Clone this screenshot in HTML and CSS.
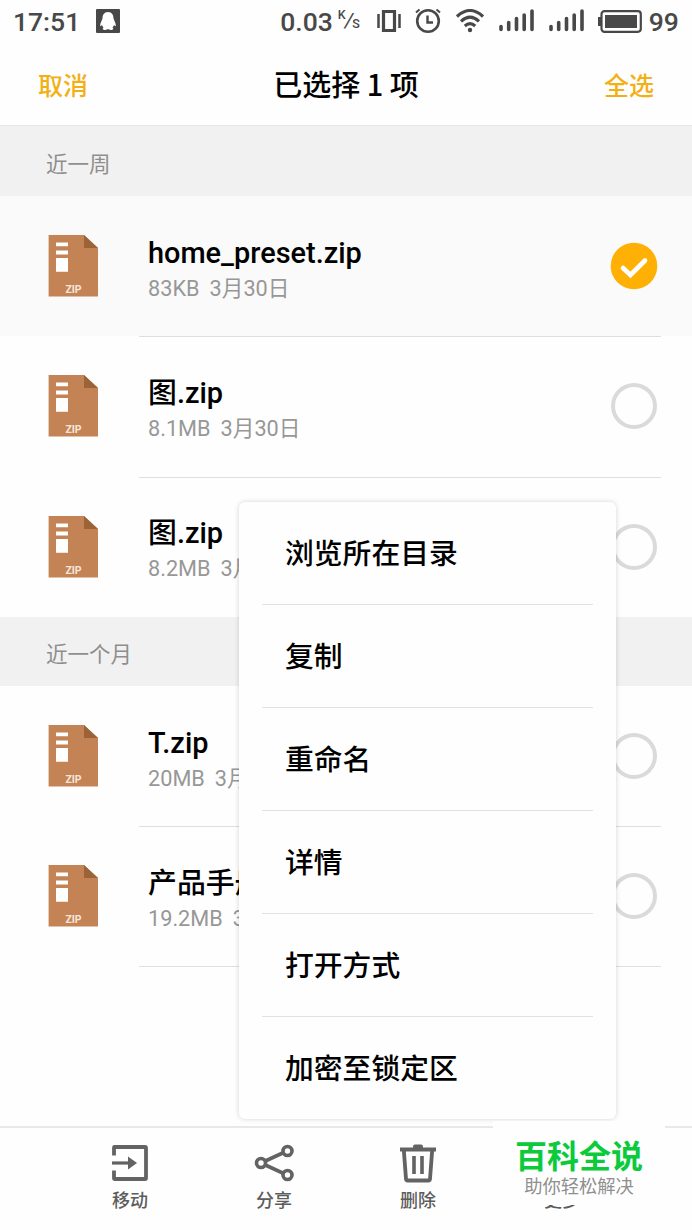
FILE: index.html
```html
<!DOCTYPE html>
<html lang="zh-CN">
<head>
    <meta charset="UTF-8">
    <meta name="viewport" content="width=device-width, initial-scale=1.0">
    <title>文件管理</title>
    <link rel="stylesheet" href="styles.css">
</head>
<body>

    <!-- shared icons -->
    <svg class="defs" width="0" height="0">
        <symbol id="zip" viewBox="0 0 50 62">
            <path d="M0.600 0H36L50 13V61.500H0.600Z" fill="#c38355"/>
            <path d="M36 0L50 13H36Z" fill="#9c6339"/>
            <path d="M8 7.500H20V11.300H8ZM8 15.500H20V19.500H8ZM8 23H20V36.700H8Z" fill="#fff"/>
            <text x="25.500" y="58" text-anchor="middle" class="zip-label">ZIP</text>
        </symbol>
        <symbol id="signal" viewBox="0 0 36 24">
            <path d="M2 17.500V20.500M9.700 13.500V20.500M17.500 9.500V20.500M25.200 6V20.500M33 2V20.500" fill="none" stroke="#484848" stroke-width="3.600" stroke-linecap="round"/>
        </symbol>
    </svg>

    <header class="status-bar">
        <span class="time">17:51</span>
        <svg class="icon-qq" width="24" height="24" viewBox="0 0 24 24">
            <rect width="24" height="24" rx="1" fill="#484848"/>
            <path d="M12 3C8 3 6.500 6 6.500 9.500C6 11.500 4 14 4.200 17C4.800 17.500 5.500 16.500 6 16C6.300 17 7 18 7.500 18.500C6 19.500 7 21 9 21C10.500 21 11.500 20 12 20C12.500 20 13.500 21 15 21C17 21 18 19.500 16.500 18.500C17 18 17.700 17 18 16C18.500 16.500 19.200 17.500 19.800 17C20 14 18 11.500 17.500 9.500C17.500 6 16 3 12 3Z" fill="#fff"/>
        </svg>
        <span class="speed">0.03</span>
        <span class="unit"><sup>K</sup><i>/</i><sub>S</sub></span>
        <svg class="icon-vibrate" width="24" height="24" viewBox="0 0 24 24">
            <path d="M1.500 5V19M22.500 5V19" stroke="#484848" stroke-width="2.500"/>
            <path d="M6.500 2.500H17.500V21.500H6.500Z" fill="none" stroke="#484848" stroke-width="3.200"/>
        </svg>
        <svg class="icon-alarm" width="26" height="26" viewBox="0 0 26 26">
            <circle cx="13" cy="13" r="10.800" fill="none" stroke="#484848" stroke-width="2.600"/>
            <path d="M12.500 7.500V14.500H18" fill="none" stroke="#484848" stroke-width="2.400"/>
            <path d="M1 4.500L4.500 1.500M25 4.500L21.500 1.500" stroke="#484848" stroke-width="2"/>
        </svg>
        <svg class="icon-wifi" width="28" height="24" viewBox="0 0 28 24">
            <path d="M1 7.500Q14 -4.500 27 7.500M5 12.300Q14 4 23 12.300M8.800 17Q14 12.300 19.200 17" fill="none" stroke="#484848" stroke-width="3.100"/>
            <circle cx="14" cy="21" r="2.200" fill="#484848"/>
        </svg>
        <svg class="icon-signal" width="36" height="24"><use href="#signal"/></svg>
        <svg class="icon-signal second" width="36" height="24"><use href="#signal"/></svg>
        <svg class="icon-battery" width="44" height="23" viewBox="0 0 44 23">
            <rect x="3.500" y="1.200" width="39.300" height="20.600" rx="3" fill="none" stroke="#484848" stroke-width="2.200"/>
            <rect x="7" y="5" width="32" height="13" fill="#484848"/>
            <path d="M3 7H0V16H3Z" fill="#484848"/>
        </svg>
        <span class="percent">99</span>
    </header>

    <nav class="title-bar">
        <span class="action">取消</span>
        <h1>已选择 1 项</h1>
        <span class="action">全选</span>
    </nav>

    <main>
        <h2 class="section">近一周</h2>
        <div class="file selected">
            <svg class="zip" width="50" height="62"><use href="#zip"/></svg>
            <div class="info">
                <p class="name">home_preset.zip</p>
                <p class="meta"><span>83KB</span><span>3月30日</span></p>
            </div>
            <svg class="check" width="48" height="48" viewBox="0 0 48 48">
                <circle cx="24" cy="24" r="23.300" fill="#ffb005"/>
                <path d="M13 26L20.500 33L35 18.500" fill="none" stroke="#fff" stroke-width="4.600" stroke-linecap="round" stroke-linejoin="miter"/>
            </svg>
        </div>
        <div class="file">
            <svg class="zip" width="50" height="62"><use href="#zip"/></svg>
            <div class="info">
                <p class="name">图.zip</p>
                <p class="meta"><span>8.1MB</span><span>3月30日</span></p>
            </div>
            <span class="radio"></span>
        </div>
        <div class="file last">
            <svg class="zip" width="50" height="62"><use href="#zip"/></svg>
            <div class="info">
                <p class="name">图.zip</p>
                <p class="meta"><span>8.2MB</span><span>3月30日</span></p>
            </div>
            <span class="radio"></span>
        </div>

        <h2 class="section month">近一个月</h2>
        <div class="file">
            <svg class="zip" width="50" height="62"><use href="#zip"/></svg>
            <div class="info">
                <p class="name">T.zip</p>
                <p class="meta"><span>20MB</span><span>3月</span></p>
            </div>
            <span class="radio"></span>
        </div>
        <div class="file">
            <svg class="zip" width="50" height="62"><use href="#zip"/></svg>
            <div class="info">
                <p class="name">产品手册</p>
                <p class="meta"><span>19.2MB</span><span>3月</span></p>
            </div>
            <span class="radio"></span>
        </div>
    </main>

    <footer class="toolbar">
        <div class="tool">
            <svg width="40" height="40" viewBox="0 0 40 40">
                <path d="M4 12.500V4.500Q4 4 4.500 4H35Q36 4 36 5V35Q36 36 35 36H4.500Q4 36 4 35.500V27.500" fill="none" stroke="#636363" stroke-width="3.800"/>
                <path d="M2 20H20" stroke="#636363" stroke-width="3.200"/>
                <path d="M18 13.500L27 20L18 26.500Z" fill="#636363"/>
            </svg>
            <span>移动</span>
        </div>
        <div class="tool">
            <svg width="40" height="40" viewBox="0 0 40 40">
                <path d="M7 20L33 8M7 20L33 32" stroke="#636363" stroke-width="3.600"/>
                <g fill="#fff" stroke="#636363" stroke-width="3.600">
                    <circle cx="7" cy="20" r="4.500"/>
                    <circle cx="33.500" cy="8" r="4.500"/>
                    <circle cx="33.500" cy="32" r="4.500"/>
                </g>
            </svg>
            <span>分享</span>
        </div>
        <div class="tool">
            <svg width="40" height="40" viewBox="0 0 40 40">
                <path d="M2 6.500H38" stroke="#636363" stroke-width="3.800"/>
                <path d="M15 6V3.500Q15 1.500 17 1.500H23Q25 1.500 25 3.500V6Z" fill="#636363"/>
                <path d="M5.800 7L8 36Q8.200 37.500 9.500 37.500H30.500Q31.800 37.500 32 36L34.200 7" fill="none" stroke="#636363" stroke-width="3.800"/>
                <path d="M16 13V31M24 13V31" stroke="#636363" stroke-width="3.600"/>
            </svg>
            <span>删除</span>
        </div>
        <div class="tool">
            <svg width="40" height="40" viewBox="0 0 40 40">
                <g fill="#636363">
                    <circle cx="8" cy="20" r="3"/>
                    <circle cx="20" cy="20" r="3"/>
                    <circle cx="32" cy="20" r="3"/>
                </g>
            </svg>
            <span>更多</span>
        </div>
    </footer>

    <ul class="menu">
        <li>浏览所在目录</li>
        <li>复制</li>
        <li>重命名</li>
        <li>详情</li>
        <li>打开方式</li>
        <li>加密至锁定区</li>
    </ul>

    <div class="badge">
        <strong>百科全说</strong>
        <span>助你轻松解决</span>
    </div>

</body>
</html>
```
FILE: styles.css
```css
html, body {
    height: 100%;
    margin: 0;
    padding: 0;
    overflow: hidden;
}

body {
    position: relative;
    display: flex;
    flex-direction: column;
    background: #fefefe;
    color: #000;
    font-family: Roboto, "Noto Sans CJK SC", sans-serif;
}

h1, h2, p, ul {
    margin: 0;
    padding: 0;
}

.defs {
    position: absolute;
}

.status-bar {
    display: flex;
    align-items: center;
    box-sizing: border-box;
    height: 42px;
    padding-left: 13px;
    color: #484848;
    font-size: 26.5px;
    font-weight: 500;
}

.icon-qq {
    margin-left: 16px;
}

.speed {
    margin-left: 160px;
}

.unit {
    display: flex;
    align-items: center;
    width: 24px;
    margin-left: 5px;
    font-size: 15px;
    line-height: 1;
}

.unit sup {
    margin-top: -11px;
}

.unit i {
    margin: 0 -1px;
    font-size: 21px;
    font-weight: 400;
}

.unit sub {
    margin-top: 7px;
}

.icon-vibrate {
    margin-left: 15px;
}

.icon-alarm {
    margin-left: 14px;
}

.icon-wifi {
    margin-left: 15px;
}

.icon-signal {
    margin-left: 15px;
}

.icon-signal.second {
    margin-left: 14px;
}

.icon-battery {
    margin-left: 13px;
}

.percent {
    margin-left: 7px;
}

.title-bar {
    display: flex;
    align-items: center;
    justify-content: space-between;
    box-sizing: border-box;
    height: 84px;
    padding: 0 38px;
    border-bottom: 1px solid #e6e6e6;
}

.title-bar h1 {
    margin-top: -2px;
    font-family: "Noto Sans CJK SC", sans-serif;
    font-size: 29px;
    font-weight: 500;
    line-height: 40px;
}

.action {
    color: #f3b014;
    font-size: 25px;
    font-weight: 500;
}

.section {
    box-sizing: border-box;
    height: 70px;
    padding-left: 46px;
    background: #f1f1f1;
    color: #8e8e8e;
    font-size: 21.5px;
    font-weight: 400;
    line-height: 77px;
}

.section.month {
    height: 69px;
    line-height: 75px;
}

.file {
    position: relative;
    display: flex;
    align-items: center;
    box-sizing: border-box;
    height: 140.3px;
    padding: 0 35px 0 48px;
}

/* divider starts at the text column */
.file::after {
    content: '';
    position: absolute;
    left: 139px;
    right: 31px;
    bottom: -1px;
    height: 1px;
    background: #dedede;
}

.file.last::after {
    display: none;
}

.file.selected {
    background: #fafafa;
}

.zip {
    flex: none;
}

.zip-label {
    fill: #f8e5d8;
    font-family: Roboto, sans-serif;
    font-size: 10.5px;
    font-weight: 700;
}

.info {
    flex: 1;
    margin-left: 50px;
    padding-top: 7px;
}

.name {
    font-size: 28.9px;
    font-weight: 500;
    line-height: 38px;
    white-space: nowrap;
}

.meta {
    display: flex;
    gap: 10px;
    color: #979797;
    font-size: 21.7px;
    line-height: 34px;
}

.radio {
    box-sizing: border-box;
    width: 46px;
    height: 46px;
    border: 4px solid #dadada;
    border-radius: 50%;
}

.check {
    margin-right: -1px;
}

.toolbar {
    display: flex;
    box-sizing: border-box;
    height: 104px;
    margin-top: auto;
    padding: 15px 58px 0 58px;
    border-top: 2px solid #e8e8e8;
}

.tool {
    flex: 1;
    display: flex;
    flex-direction: column;
    align-items: center;
    color: #5c5c5c;
    font-size: 18px;
    font-weight: 500;
}

.tool span {
    margin-top: 5px;
    line-height: 26px;
}

.menu {
    position: absolute;
    left: 239px;
    top: 502px;
    box-sizing: border-box;
    width: 377px;
    height: 617px;
    padding: 0 23px;
    display: flex;
    flex-direction: column;
    list-style: none;
    background: #fefefe;
    border-radius: 6px;
    box-shadow: 0 0 5px rgba(0, 0, 0, 0.17);
}

.menu li {
    flex: 1;
    display: flex;
    align-items: center;
    padding: 0 0 3px 23px;
    border-bottom: 1px solid #e2e2e2;
    font-size: 28.8px;
    font-weight: 500;
}

.menu li:last-child {
    border-bottom: none;
}

.badge {
    position: absolute;
    left: 493px;
    top: 1121px;
    width: 172px;
    height: 84px;
    display: flex;
    flex-direction: column;
    align-items: center;
    background: #fefefe;
}

.badge strong {
    margin-top: 17px;
    color: #0bcb3c;
    font-size: 32px;
    font-weight: 700;
    line-height: 38px;
}

.badge span {
    margin-top: -1px;
    color: #8f8f8f;
    font-size: 18.3px;
    line-height: 24px;
}
```
